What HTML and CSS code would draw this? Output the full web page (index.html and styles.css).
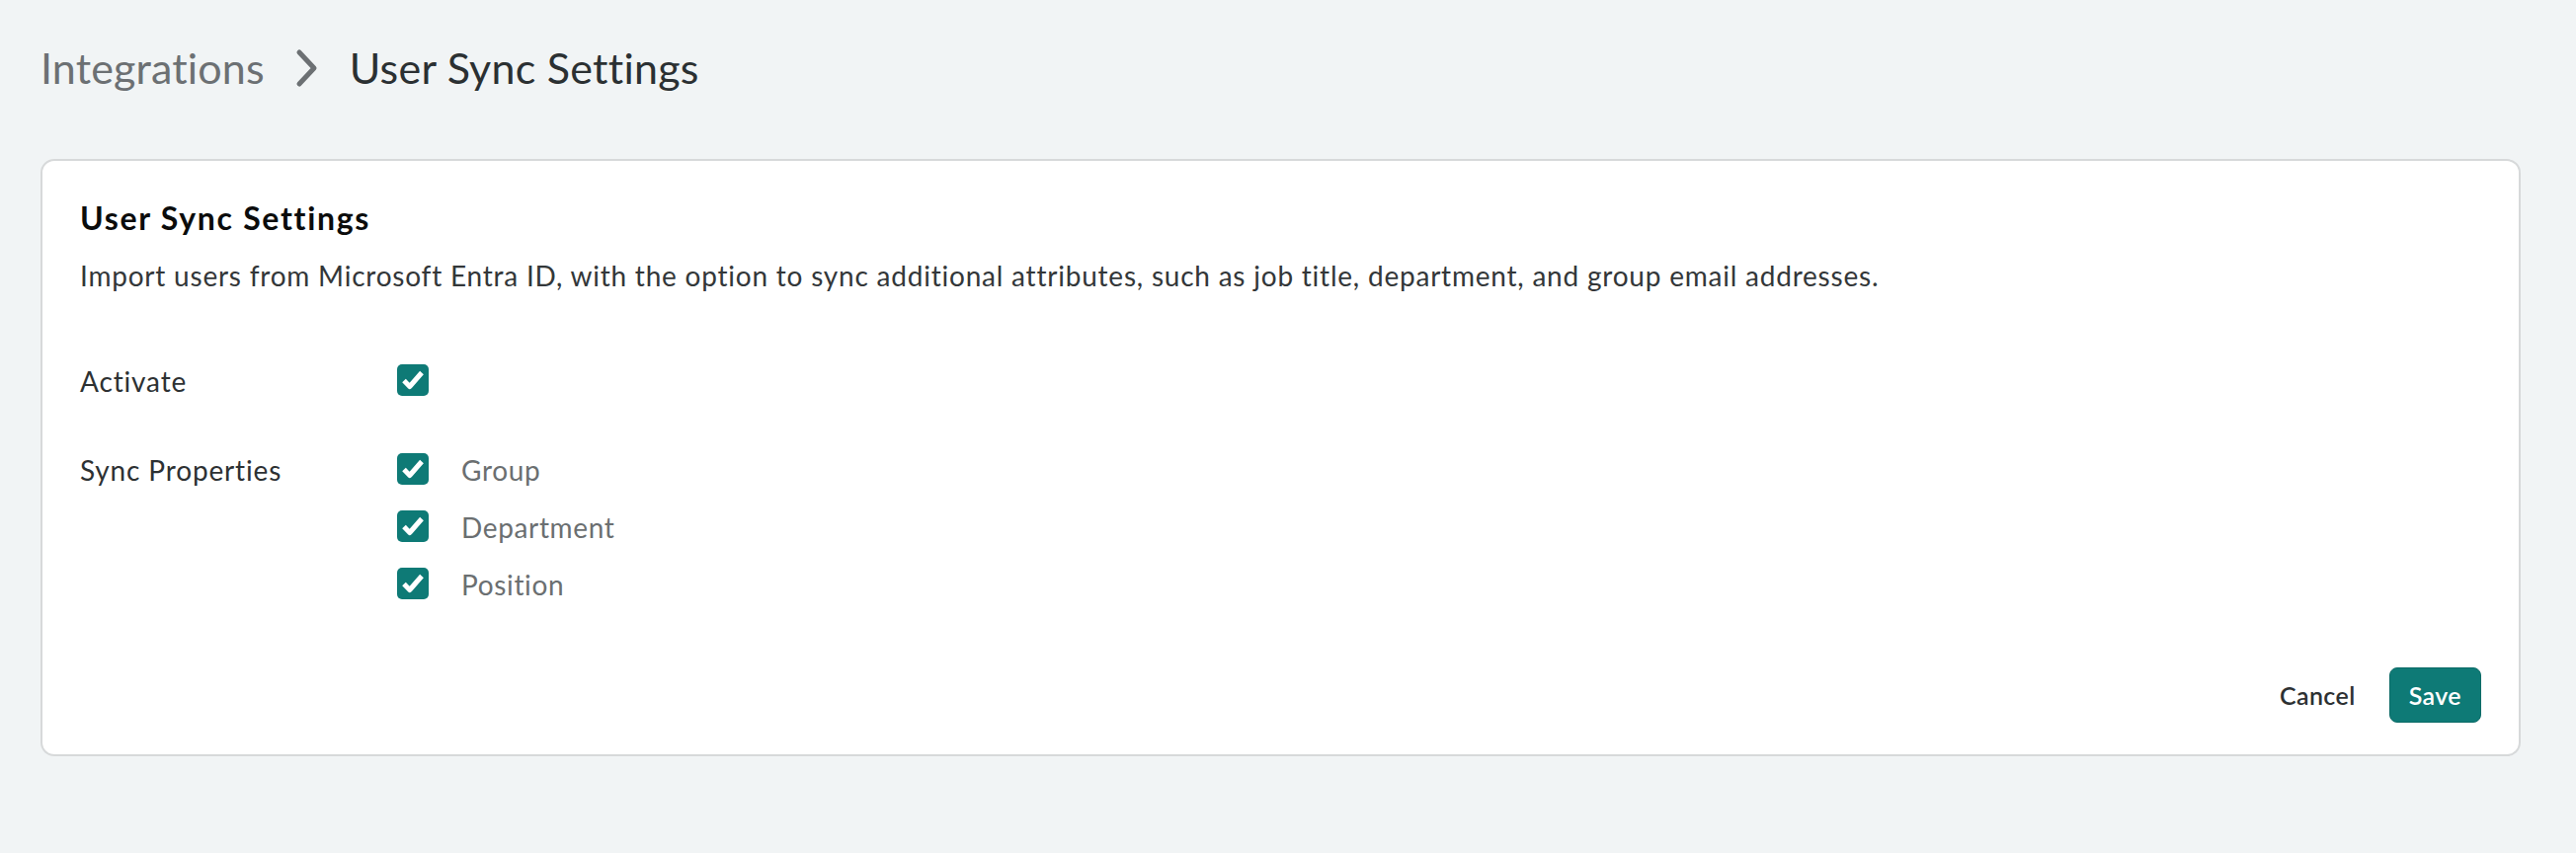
FILE: index.html
```html
<!DOCTYPE html>
<html lang="en">
<head>
<meta charset="utf-8">
<title>User Sync Settings</title>
<link rel="stylesheet" href="styles.css">
</head>
<body>
<main class="page">
  <nav class="breadcrumb">
    <span class="crumb-link">Integrations</span>
    <svg class="crumb-sep" width="24" height="40" viewBox="0 0 24 40" aria-hidden="true">
      <polyline points="4,4 19,20 4,36" fill="none" stroke="currentColor" stroke-width="5" stroke-linecap="round" stroke-linejoin="round"/>
    </svg>
    <span class="crumb-current">User Sync Settings</span>
  </nav>

  <section class="card">
    <h1 class="card-title">User Sync Settings</h1>
    <p class="card-desc">Import users from Microsoft Entra ID, with the option to sync additional attributes, such as job title, department, and group email addresses.</p>

    <div class="form">
      <div class="form-row">
        <div class="form-label">Activate</div>
        <div class="form-field">
          <label class="option">
            <span class="checkbox"><svg viewBox="0 0 32 32" width="32" height="32"><polyline points="7,16.5 12.8,22.5 25,8.5" fill="none" stroke="#fff" stroke-width="5" stroke-linejoin="round"/></svg></span>
          </label>
        </div>
      </div>
      <div class="form-row">
        <div class="form-label">Sync Properties</div>
        <div class="form-field options">
          <label class="option">
            <span class="checkbox"><svg viewBox="0 0 32 32" width="32" height="32"><polyline points="7,16.5 12.8,22.5 25,8.5" fill="none" stroke="#fff" stroke-width="5" stroke-linejoin="round"/></svg></span>
            <span class="option-text">Group</span>
          </label>
          <label class="option">
            <span class="checkbox"><svg viewBox="0 0 32 32" width="32" height="32"><polyline points="7,16.5 12.8,22.5 25,8.5" fill="none" stroke="#fff" stroke-width="5" stroke-linejoin="round"/></svg></span>
            <span class="option-text">Department</span>
          </label>
          <label class="option">
            <span class="checkbox"><svg viewBox="0 0 32 32" width="32" height="32"><polyline points="7,16.5 12.8,22.5 25,8.5" fill="none" stroke="#fff" stroke-width="5" stroke-linejoin="round"/></svg></span>
            <span class="option-text">Position</span>
          </label>
        </div>
      </div>
    </div>

    <div class="actions">
      <button class="btn btn-text" type="button">Cancel</button>
      <button class="btn btn-primary" type="button">Save</button>
    </div>
  </section>
</main>
</body>
</html>
```

FILE: styles.css
```css
* { box-sizing: border-box; }

html, body {
  margin: 0;
  padding: 0;
  background: #f1f4f5;
}

body {
  font-family: Lato, "Liberation Sans", sans-serif;
  color: #2d3133;
}

.page {
  padding: 39px 56px 0 41px;
}

.breadcrumb {
  display: flex;
  align-items: center;
  gap: 31px;
  height: 60px;
  line-height: 60px;
  font-size: 43px;
  letter-spacing: 0.15px;
}

.crumb-link {
  color: #6c7073;
}

.crumb-sep {
  color: #6c7073;
  display: block;
}

.crumb-current {
  color: #2b3032;
  letter-spacing: 0.25px;
}

.card {
  margin-top: 62px;
  background: #ffffff;
  border: 2px solid #d7d9da;
  border-radius: 14px;
  padding: 40px 38px 32px 38px;
}

.card-title {
  margin: 0;
  font-size: 32px;
  line-height: 36px;
  font-weight: 700;
  letter-spacing: 1.7px;
  color: #0b0c0c;
}

.card-desc {
  margin: 22px 0 0 0;
  font-size: 28px;
  line-height: 36px;
  letter-spacing: 0.78px;
  color: #333739;
}

.form {
  margin-top: 72px;
  display: flex;
  flex-direction: column;
  gap: 56px;
}

.form-row {
  display: flex;
  align-items: flex-start;
}

.form-label {
  width: 321px;
  flex: none;
  font-size: 28px;
  line-height: 34px;
  letter-spacing: 0.85px;
  color: #2d3133;
}

.options {
  display: flex;
  flex-direction: column;
  gap: 24px;
}

.option {
  display: flex;
  align-items: flex-start;
  gap: 33px;
  height: 34px;
}

.checkbox {
  width: 32px;
  height: 32px;
  border-radius: 5px;
  background: #0e7a76;
  display: block;
  flex: none;
}

.checkbox svg {
  display: block;
}

.option-text {
  font-size: 28px;
  line-height: 34px;
  letter-spacing: 0.65px;
  color: #6b6f71;
}

.actions {
  margin-top: 67px;
  display: flex;
  justify-content: flex-end;
  gap: 14px;
}

.btn {
  font-family: Lato, "Liberation Sans", sans-serif;
  font-size: 25px;
  font-weight: 600;
  letter-spacing: 0.4px;
  height: 56px;
  padding: 0 19px;
  border-radius: 8px;
  border: 1px solid transparent;
  cursor: pointer;
}

.btn-text {
  background: transparent;
  color: #2d3133;
}

.btn-primary {
  background: #0e7a76;
  border-color: #0c6b67;
  color: #ffffff;
}
```
